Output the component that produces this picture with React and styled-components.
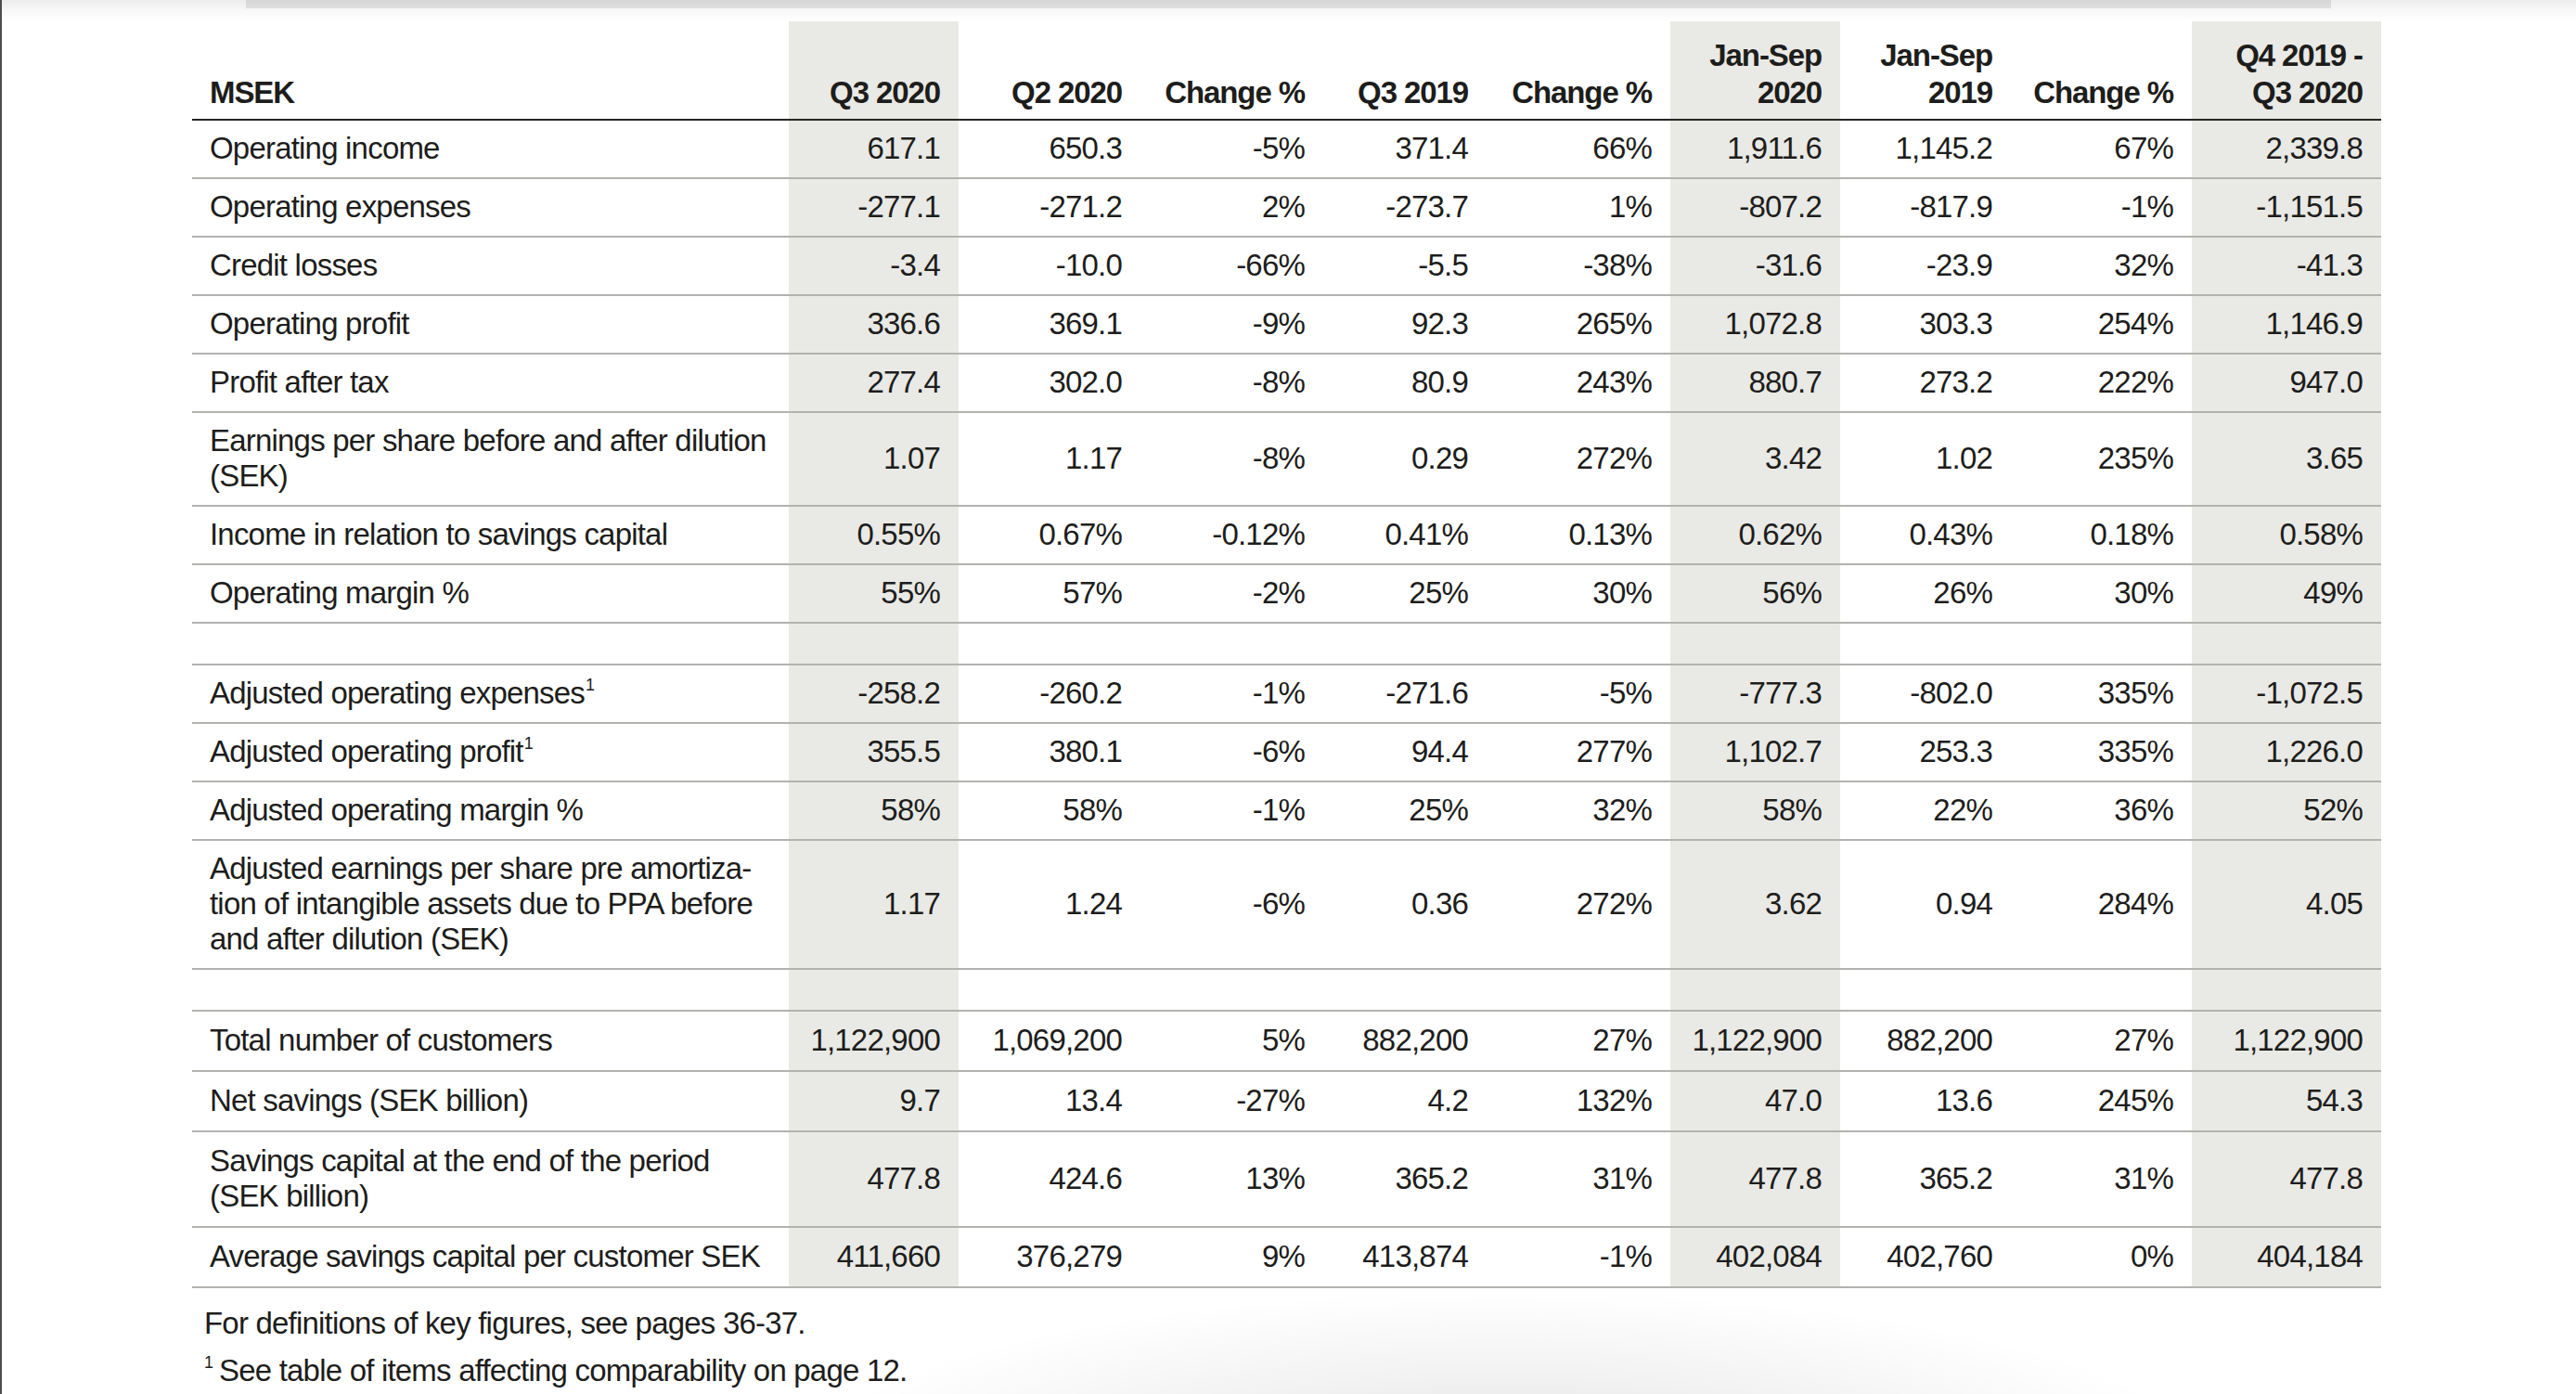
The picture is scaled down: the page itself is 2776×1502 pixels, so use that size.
import React from "react";
import styled, { createGlobalStyle } from "styled-components";

const GlobalStyle = createGlobalStyle`
  html, body {
    margin: 0;
    padding: 0;
    background: #fff;
  }
  body {
    font-family: "Liberation Sans", Arial, Helvetica, sans-serif;
    color: #1d1d1b;
  }
`;

const Page = styled.div`
  position: relative;
  width: 2776px;
  height: 1502px;
  box-sizing: border-box;
  overflow: hidden;
  border-left: 2px solid #4d4d4d;
  display: flex;
  flex-direction: column;
  background: radial-gradient(
    ellipse 780px 200px at 1620px 1590px,
    rgba(0, 0, 0, 0.13),
    rgba(0, 0, 0, 0.05) 55%,
    rgba(0, 0, 0, 0) 100%
  );
`;

const TopEdge = styled.div`
  height: 23px;
  flex: none;
  padding-left: 263px;
  background: linear-gradient(#ececec 0%, #f7f7f7 45%, #fff 100%);
`;

const PrevPage = styled.div`
  width: 2247px;
  height: 9px;
  background: linear-gradient(#d6d6d6, #dfdfdf);
`;

const Table = styled.table`
  margin-left: 205px;
  border-collapse: collapse;
  table-layout: fixed;
  width: 2359px;
  font-size: 33px;
  letter-spacing: -0.8px;
`;

const HeadCell = styled.th`
  height: 97px;
  padding: 0 20px 8px 19px;
  vertical-align: bottom;
  text-align: ${(p) => (p.$left ? "left" : "right")};
  font-weight: 700;
  line-height: 40px;
  letter-spacing: -1.1px;
  color: #1d1d1b;
  white-space: nowrap;
  background: ${(p) => (p.$shade ? "#e9e9e5" : "transparent")};
  border-bottom: 2px solid #262626;
`;

const Cell = styled.td`
  padding: ${(p) =>
    p.$spacer ? "0" : p.$roomy ? "12px 20px 13px 19px" : "11px 20px 12px 19px"};
  height: ${(p) => (p.$spacer ? "43px" : "auto")};
  vertical-align: middle;
  text-align: ${(p) => (p.$left ? "left" : "right")};
  line-height: 38px;
  color: #1d1d1b;
  white-space: nowrap;
  background: ${(p) => (p.$shade ? "#e9e9e5" : "transparent")};
  border-bottom: 2px solid #b2b2af;
`;

const Sup = styled.sup`
  font-size: 18px;
  line-height: 0;
  vertical-align: 14px;
  letter-spacing: 0;
  margin-left: 1px;
`;

const Notes = styled.div`
  padding: 12px 0 0 218px;
  font-size: 33px;
  letter-spacing: -0.8px;
  line-height: 51px;
  color: #1d1d1b;
`;

const NoteSup = styled.sup`
  font-size: 18px;
  line-height: 0;
  vertical-align: 14px;
  letter-spacing: 0;
  margin-right: 6px;
`;

const cols = [643, 183, 196, 197, 176, 198, 183, 184, 195, 204];
const shaded = [1, 6, 9];

const headers = [
  ["MSEK"],
  ["Q3 2020"],
  ["Q2 2020"],
  ["Change %"],
  ["Q3 2019"],
  ["Change %"],
  ["Jan-Sep", "2020"],
  ["Jan-Sep", "2019"],
  ["Change %"],
  ["Q4 2019 -", "Q3 2020"],
];

// label lines, values, footnote mark, roomier rows in the last block
const rows = [
  { label: ["Operating income"], values: ["617.1", "650.3", "-5%", "371.4", "66%", "1,911.6", "1,145.2", "67%", "2,339.8"] },
  { label: ["Operating expenses"], values: ["-277.1", "-271.2", "2%", "-273.7", "1%", "-807.2", "-817.9", "-1%", "-1,151.5"] },
  { label: ["Credit losses"], values: ["-3.4", "-10.0", "-66%", "-5.5", "-38%", "-31.6", "-23.9", "32%", "-41.3"] },
  { label: ["Operating profit"], values: ["336.6", "369.1", "-9%", "92.3", "265%", "1,072.8", "303.3", "254%", "1,146.9"] },
  { label: ["Profit after tax"], values: ["277.4", "302.0", "-8%", "80.9", "243%", "880.7", "273.2", "222%", "947.0"] },
  { label: ["Earnings per share before and after dilution", "(SEK)"], values: ["1.07", "1.17", "-8%", "0.29", "272%", "3.42", "1.02", "235%", "3.65"] },
  { label: ["Income in relation to savings capital"], values: ["0.55%", "0.67%", "-0.12%", "0.41%", "0.13%", "0.62%", "0.43%", "0.18%", "0.58%"] },
  { label: ["Operating margin %"], values: ["55%", "57%", "-2%", "25%", "30%", "56%", "26%", "30%", "49%"] },
  null,
  { label: ["Adjusted operating expenses"], note: true, values: ["-258.2", "-260.2", "-1%", "-271.6", "-5%", "-777.3", "-802.0", "335%", "-1,072.5"] },
  { label: ["Adjusted operating profit"], note: true, values: ["355.5", "380.1", "-6%", "94.4", "277%", "1,102.7", "253.3", "335%", "1,226.0"] },
  { label: ["Adjusted operating margin %"], values: ["58%", "58%", "-1%", "25%", "32%", "58%", "22%", "36%", "52%"] },
  {
    label: ["Adjusted earnings per share pre amortiza-", "tion of intangible assets due to PPA before", "and after dilution (SEK)"],
    values: ["1.17", "1.24", "-6%", "0.36", "272%", "3.62", "0.94", "284%", "4.05"],
  },
  null,
  { label: ["Total number of customers"], roomy: true, values: ["1,122,900", "1,069,200", "5%", "882,200", "27%", "1,122,900", "882,200", "27%", "1,122,900"] },
  { label: ["Net savings (SEK billion)"], roomy: true, values: ["9.7", "13.4", "-27%", "4.2", "132%", "47.0", "13.6", "245%", "54.3"] },
  { label: ["Savings capital at the end of the period", "(SEK billion)"], roomy: true, values: ["477.8", "424.6", "13%", "365.2", "31%", "477.8", "365.2", "31%", "477.8"] },
  { label: ["Average savings capital per customer SEK"], roomy: true, values: ["411,660", "376,279", "9%", "413,874", "-1%", "402,084", "402,760", "0%", "404,184"] },
];

function Lines({ lines }) {
  return lines.map((l, i) => (
    <React.Fragment key={i}>
      {i > 0 && <br />}
      {l}
    </React.Fragment>
  ));
}

export default function App() {
  return (
    <>
      <GlobalStyle />
      <Page>
        <TopEdge>
          <PrevPage />
        </TopEdge>
        <Table>
          <colgroup>
            {cols.map((w, i) => (
              <col key={i} style={{ width: w }} />
            ))}
          </colgroup>
          <thead>
            <tr>
              {headers.map((h, i) => (
                <HeadCell key={i} $left={i === 0} $shade={shaded.includes(i)}>
                  <Lines lines={h} />
                </HeadCell>
              ))}
            </tr>
          </thead>
          <tbody>
            {rows.map((r, ri) =>
              r === null ? (
                <tr key={ri}>
                  {cols.map((_, i) => (
                    <Cell key={i} $spacer $shade={shaded.includes(i)} />
                  ))}
                </tr>
              ) : (
                <tr key={ri}>
                  <Cell $left $roomy={r.roomy}>
                    <Lines lines={r.label} />
                    {r.note && <Sup>1</Sup>}
                  </Cell>
                  {r.values.map((v, i) => (
                    <Cell key={i} $roomy={r.roomy} $shade={shaded.includes(i + 1)}>
                      {v}
                    </Cell>
                  ))}
                </tr>
              )
            )}
          </tbody>
        </Table>
        <Notes>
          <div>For definitions of key figures, see pages 36-37.</div>
          <div>
            <NoteSup>1</NoteSup>See table of items affecting comparability on page 12.
          </div>
        </Notes>
      </Page>
    </>
  );
}
